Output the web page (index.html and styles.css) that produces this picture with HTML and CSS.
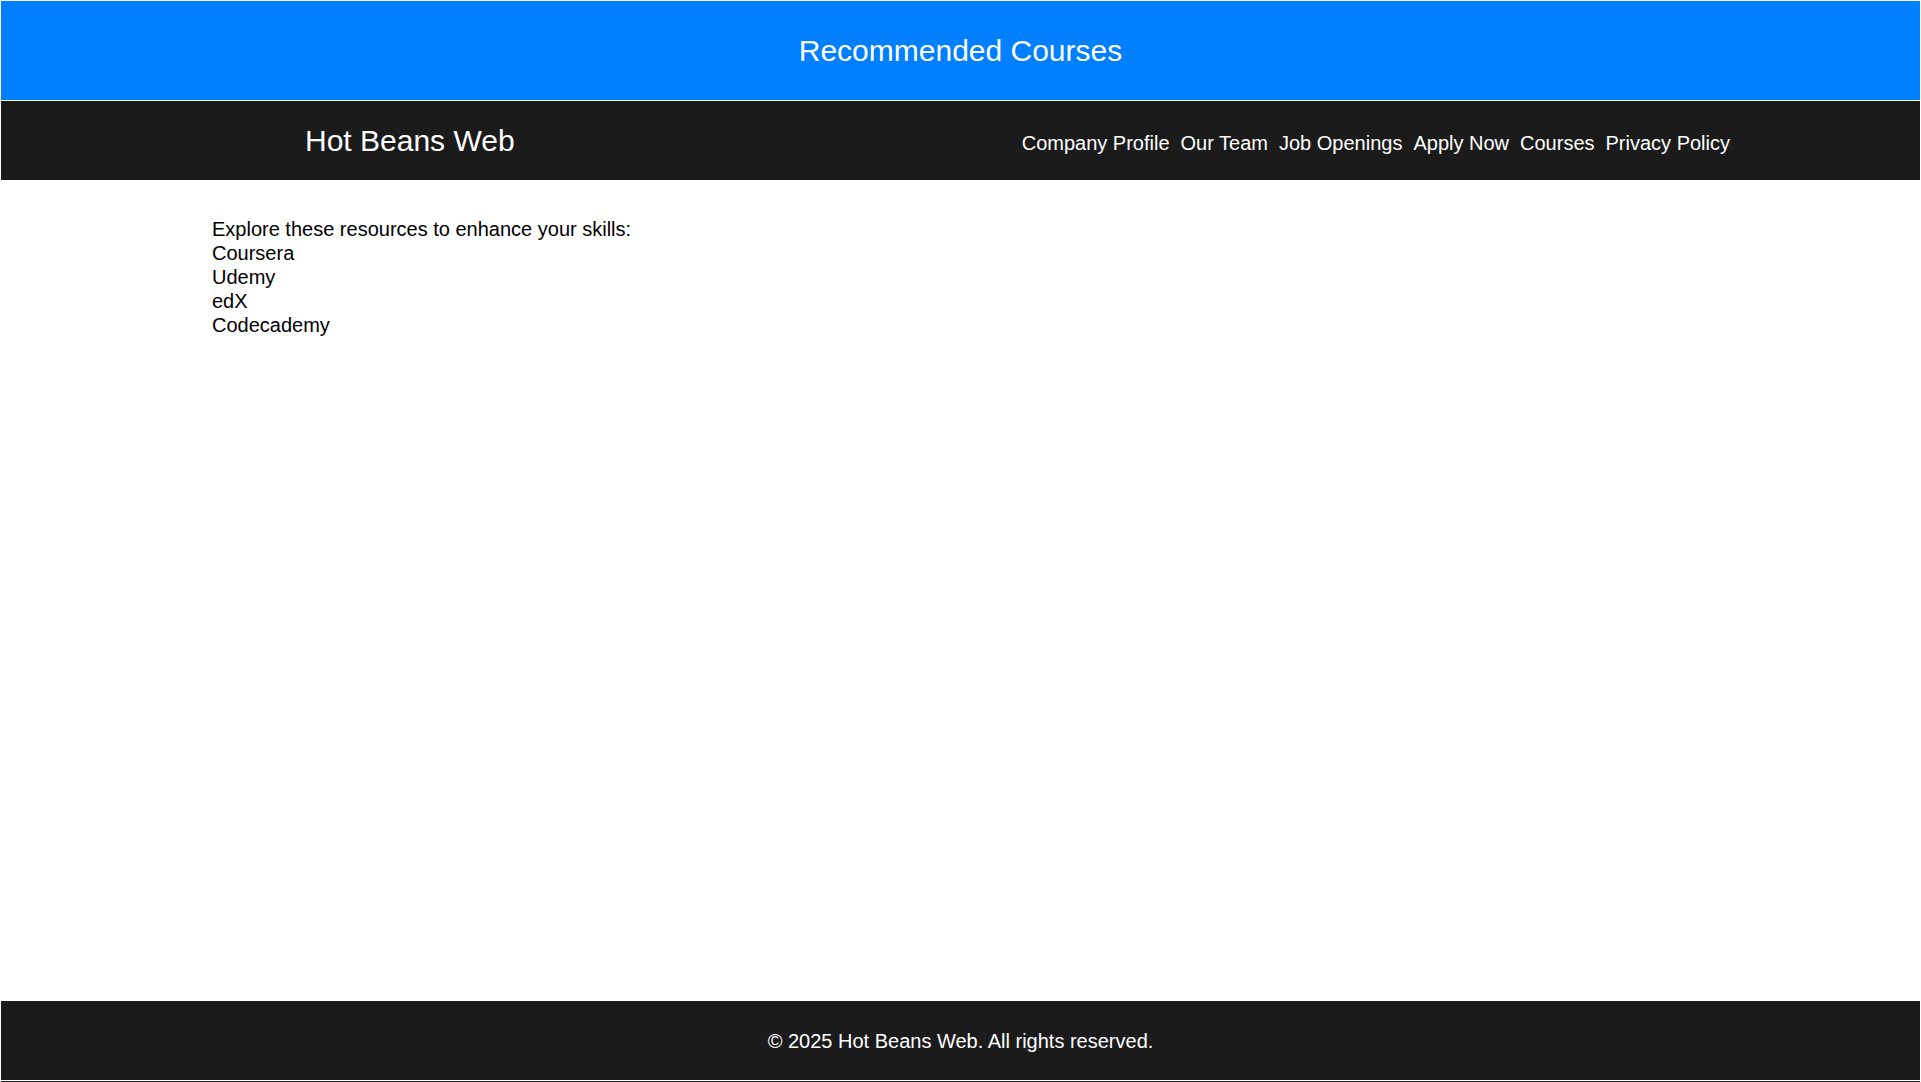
FILE: index.html
```html
<!DOCTYPE html>
<html lang="en">
<head>
<meta charset="utf-8">
<title>Recommended Courses - Hot Beans Web</title>
<link rel="stylesheet" href="styles.css">
</head>
<body>
<div class="page">
  <header class="banner">
    <h1 class="banner-title">Recommended Courses</h1>
  </header>
  <nav class="navbar">
    <div class="logo">Hot Beans Web</div>
    <ul class="nav-links">
      <li><a href="#">Company Profile</a></li>
      <li><a href="#">Our Team</a></li>
      <li><a href="#">Job Openings</a></li>
      <li><a href="#">Apply Now</a></li>
      <li><a href="#">Courses</a></li>
      <li><a href="#">Privacy Policy</a></li>
    </ul>
  </nav>
  <main class="content">
    <p class="intro">Explore these resources to enhance your skills:</p>
    <ul class="resources">
      <li>Coursera</li>
      <li>Udemy</li>
      <li>edX</li>
      <li>Codecademy</li>
    </ul>
  </main>
  <footer class="footer">
    <p class="footer-text">&copy; 2025 Hot Beans Web. All rights reserved.</p>
  </footer>
  <div class="bottom-strip"></div>
</div>
</body>
</html>
```

FILE: styles.css
```css
* {
  box-sizing: border-box;
}

html, body {
  margin: 0;
  padding: 0;
  background: #ffffff;
}

body {
  font-family: "Liberation Sans", Arial, sans-serif;
  font-size: 20px;
  color: #000000;
  padding: 1px 1px 0 1px;
}

.page {
  min-height: 1081px;
  display: flex;
  flex-direction: column;
}

.banner {
  background: #007fff;
  height: 99px;
  display: flex;
  align-items: center;
  justify-content: center;
  margin-bottom: 1px;
}

.banner-title {
  margin: 0;
  font-size: 30px;
  font-weight: normal;
  color: #ffffff;
}

.navbar {
  background: #1b1b1b;
  height: 79px;
  display: flex;
  align-items: center;
  padding: 0 190px 0 304px;
}

.logo {
  font-size: 30px;
  color: #ffffff;
  margin-top: 0;
}

.nav-links {
  list-style: none;
  margin: 0 0 0 auto;
  padding: 0;
  display: flex;
  gap: 11px;
  margin-top: 5px;
}

.nav-links a {
  color: #ffffff;
  text-decoration: none;
  font-size: 20px;
}

.content {
  flex: 1;
  padding: 37px 211px 0 211px;
  line-height: 24px;
}

.intro {
  margin: 0;
}

.resources {
  list-style: none;
  margin: 0;
  padding: 0;
}

.footer {
  background: #1b1b1b;
  height: 79px;
  display: flex;
  align-items: center;
  justify-content: center;
  margin-bottom: 1px;
  padding-top: 2px;
}

.footer-text {
  margin: 0;
  color: #ffffff;
  font-size: 20px;
}

.bottom-strip {
  background: #1b1b1b;
  height: 1px;
}
```
